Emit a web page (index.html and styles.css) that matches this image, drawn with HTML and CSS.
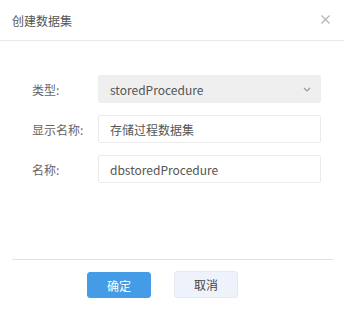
FILE: index.html
```html
<!DOCTYPE html>
<html lang="zh-CN">
<head>
  <meta charset="UTF-8" />
  <title>创建数据集</title>
  <link rel="stylesheet" href="styles.css">
</head>
<body>
  <div class="dialog">
    <!-- Header -->
    <div class="dialog-header">
      <span class="dialog-title">创建数据集</span>
      <span class="dialog-close">
        <svg width="9" height="9" viewBox="0 0 9 9"><path d="M0.5 0.5L8.5 8.5M8.5 0.5L0.5 8.5" stroke="#b4b4b4" stroke-width="1.2"/></svg>
      </span>
    </div>

    <!-- Form -->
    <div class="dialog-body">
      <div class="form-row">
        <label>类型:</label>
        <div class="select-box">
          <span>storedProcedure</span>
          <svg width="8" height="5" viewBox="0 0 8 5"><path d="M1 1L4 4L7 1" stroke="#999" stroke-width="1.2" fill="none"/></svg>
        </div>
      </div>
      <div class="form-row">
        <label>显示名称:</label>
        <div class="input-box">存储过程数据集</div>
      </div>
      <div class="form-row">
        <label>名称:</label>
        <div class="input-box">dbstoredProcedure</div>
      </div>
    </div>

    <!-- Footer -->
    <div class="dialog-footer">
      <button class="btn btn-primary">确定</button>
      <button class="btn btn-default">取消</button>
    </div>
  </div>
</body>
</html>
```

FILE: styles.css
```css
* {
  margin: 0;
  padding: 0;
  box-sizing: border-box;
}

body {
  font-family: "Noto Sans CJK SC", "Noto Sans", sans-serif;
  font-size: 12px;
  color: #555;
  background: #fff;
}

.dialog {
  width: 344px;
  height: 309px;
  display: flex;
  flex-direction: column;
}

/* Header */
.dialog-header {
  height: 41px;
  display: flex;
  justify-content: space-between;
  align-items: center;
  padding: 0 14px 0 12px;
  border-bottom: 1px solid #e8e8ee;
}

.dialog-title {
  color: #555;
}

.dialog-close {
  display: flex;
  margin-top: -1px;
}

/* Form */
.dialog-body {
  padding: 34px 23px 0 32px;
  height: 218px;
  display: flex;
  flex-direction: column;
  gap: 12px;
}

.form-row {
  display: flex;
  align-items: center;
  height: 28px;
}

.form-row label {
  width: 66px;
  color: #666;
}

.select-box, .input-box {
  flex: 1;
  height: 28px;
  display: flex;
  align-items: center;
  padding: 0 9px 0 11px;
  border: 1px solid #ebebeb;
  border-radius: 2px;
  color: #555;
}

.select-box {
  background: #efefef;
  border-color: #efefef;
  justify-content: space-between;
}

/* Footer */
.dialog-footer {
  margin: 0 11px 0 12px;
  border-top: 1px solid #e3e3e3;
  padding: 11px 0 0 75px;
  display: flex;
  gap: 23px;
}

.btn {
  width: 64px;
  height: 27px;
  font-family: inherit;
  font-size: 12px;
  border-radius: 3px;
  cursor: pointer;
}

.btn-primary {
  background: #449be6;
  border: 1px solid #449be6;
  color: #fff;
  margin-top: 1px;
  height: 26px;
}

.btn-default {
  background: #eef3fb;
  border: 1px solid #e4e9f2;
  color: #444;
}
```
